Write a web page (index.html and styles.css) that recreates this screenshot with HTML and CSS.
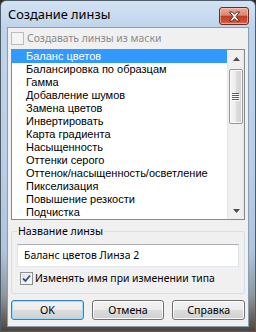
FILE: index.html
```html
<!DOCTYPE html>
<html>
<head>
<meta charset="utf-8">
<link rel="stylesheet" href="styles.css">
</head>
<body>
<div class="window">
  <div class="titlebar">
    <span class="title">Создание линзы</span>
    <div class="close">
      <svg width="13" height="11" viewBox="0 0 13 11"><path d="M1.5,1 h3 l2,2.3 l2,-2.3 h3 l-3.5,4.5 l3.5,4.5 h-3 l-2,-2.3 l-2,2.3 h-3 l3.5,-4.5 z" fill="#fff" stroke="#5a241a" stroke-width="1" stroke-linejoin="round"/></svg>
    </div>
  </div>
  <div class="client">
    <div class="check disabled"><span class="box"></span><span class="lbl">Создавать линзы из маски</span></div>
    <div class="list">
      <ul class="items">
        <li class="sel">Баланс цветов</li>
        <li>Балансировка по образцам</li>
        <li>Гамма</li>
        <li>Добавление шумов</li>
        <li>Замена цветов</li>
        <li>Инвертировать</li>
        <li>Карта градиента</li>
        <li>Насыщенность</li>
        <li>Оттенки серого</li>
        <li>Оттенок/насыщенность/осветление</li>
        <li>Пикселизация</li>
        <li>Повышение резкости</li>
        <li>Подчистка</li>
      </ul>
      <div class="scrollbar">
        <div class="arrow"><svg width="7" height="4" viewBox="0 0 7 4"><path d="M0,4 L3.5,0 L7,4 z" fill="#4d4d4d"/></svg></div>
        <div class="thumb">
          <svg width="8" height="8" viewBox="0 0 8 8"><path d="M0,0.5 h7 M0,2.5 h7 M0,4.5 h7 M0,6.5 h7" stroke="#5e5e5e" stroke-width="1"/><path d="M1,1.5 h7 M1,3.5 h7 M1,5.5 h7 M1,7.5 h7" stroke="#ffffff" stroke-width="1"/></svg>
        </div>
        <div class="track"></div>
        <div class="arrow"><svg width="7" height="4" viewBox="0 0 7 4"><path d="M0,0 L3.5,4 L7,0 z" fill="#4d4d4d"/></svg></div>
      </div>
    </div>
    <fieldset class="group">
      <legend>Название линзы</legend>
      <div class="edit">Баланс цветов Линза 2</div>
      <div class="check checked-row"><span class="box on"><svg width="9" height="9" viewBox="0 0 9 9"><path d="M1,4.5 L3.5,7 L8,1.5" fill="none" stroke="#3b4f86" stroke-width="1.8"/></svg></span><span class="lbl">Изменять имя при изменении типа</span></div>
    </fieldset>
    <div class="buttons">
      <button class="btn default">OK</button>
      <button class="btn">Отмена</button>
      <button class="btn">Справка</button>
    </div>
  </div>
</div>
</body>
</html>
```
FILE: styles.css
```css
* { box-sizing: border-box; }
html, body { margin: 0; padding: 0; }
body {
  width: 256px;
  height: 332px;
  overflow: hidden;
  background: #2e2924;
  font-family: "Noto Sans", sans-serif;
  font-size: 10.4px;
  color: #000;
}
.window {
  width: 256px;
  height: 332px;
  border: 1px solid #4f5c6b;
  border-radius: 6px 6px 0 0;
  background: linear-gradient(180deg, #d3e3f4 0px, #bfd4eb 26px, #b9d0e8 150px, #b0c5dc 250px, #8f969c 295px, #4a3f36 332px);
  display: flex;
  flex-direction: column;
}
.titlebar {
  height: 26px;
  flex: none;
  display: flex;
  align-items: flex-start;
  padding: 0 6px 0 7px;
}
.title {
  font-size: 12.8px;
  line-height: 27px;
  color: #000;
}
.close {
  margin-left: auto;
  margin-top: 6px;
  width: 30px;
  height: 18px;
  border: 1px solid #6e2a1e;
  border-radius: 3px;
  background: linear-gradient(180deg, #eba99b 0%, #dc8671 45%, #c23d25 52%, #cc5239 85%, #dc7a5d 100%);
  box-shadow: inset 0 0 0 1px rgba(255,220,210,0.5);
  display: flex;
  align-items: center;
  justify-content: center;
}
.client {
  flex: 1;
  margin: 0 6px 4px 6px;
  border: 1px solid #8b9db2;
  background: #f0f0f0;
  padding: 0 3px;
  display: flex;
  flex-direction: column;
}
.check {
  display: flex;
  align-items: center;
  gap: 3px;
  height: 13px;
  margin-top: 4px;
}
.check .lbl { line-height: 13px; white-space: nowrap; }
.check.disabled .lbl { color: #8a8a8a; }
.box {
  width: 13px;
  height: 13px;
  flex: none;
  border: 1px solid #bcbcbc;
  background: #f4f4f4;
}
.box.on {
  border: 1px solid #8e8f8f;
  background: linear-gradient(135deg, #dcdfe3, #fbfbfb);
  box-shadow: inset 0 0 0 1px #f4f4f4;
  display: flex;
  align-items: center;
  justify-content: center;
}
.list {
  margin-top: 4px;
  height: 171px;
  border: 1px solid #828790;
  background: #fff;
  display: flex;
}
.items {
  flex: 1;
  list-style: none;
  margin: 0;
  padding: 0;
  font-family: "Liberation Sans", sans-serif;
  font-size: 11px;
}
.items li {
  height: 13px;
  line-height: 13px;
  padding-left: 14px;
  white-space: nowrap;
  color: #000;
}
.items li.sel {
  background: #3399ff;
  color: #fff;
}
.scrollbar {
  width: 17px;
  flex: none;
  background: linear-gradient(90deg, #e6e6e6 0, #f0f0f0 2px, #f0f0f0 14px, #e8e8e8 17px);
  display: flex;
  flex-direction: column;
}
.arrow {
  height: 17px;
  display: flex;
  align-items: center;
  justify-content: center;
  padding-left: 1px;
}
.thumb {
  margin: 2px 1px 0 2px;
  height: 55px;
  border: 1px solid #979797;
  border-radius: 2px;
  background: linear-gradient(90deg, #f6f6f6 0%, #ebebeb 50%, #dcdcdc 51%, #d2d2d2 100%);
  box-shadow: inset 0 0 0 1px #f8f8f8;
  display: flex;
  align-items: center;
  justify-content: center;
}
.track { flex: 1; }
.group {
  margin: 4px 0 0 0;
  padding: 6px 5px 8px 5px;
  border: 1px solid #d5dfe5;
  border-radius: 3px;
  min-width: 0;
}
.group legend {
  padding: 0 1px;
  line-height: 14px;
  font-size: 10.6px;
}
.edit {
  height: 23px;
  border: 1px solid;
  border-color: #abadb3 #dbdfe6 #e3e9ef #e2e3ea;
  background: #fff;
  padding-left: 6px;
  line-height: 21px;
  white-space: nowrap;
}
.checked-row {
  margin-top: 5px;
  padding-left: 3px;
  gap: 2px;
}
.buttons {
  display: flex;
  gap: 8px;
  margin-top: 6px;
}
.btn {
  width: 73px;
  height: 20px;
  padding: 0;
  border: 1px solid #707070;
  border-radius: 3px;
  background: linear-gradient(180deg, #f2f2f2 0%, #ebebeb 50%, #dddddd 50%, #cfcfcf 100%);
  box-shadow: inset 0 0 0 1px #fcfcfc;
  font-family: "Noto Sans", sans-serif;
  font-size: 10.6px;
  color: #000;
  line-height: 17px;
}
.btn.default {
  border-color: #3c7fb1;
  box-shadow: inset 0 0 0 1px #9fdcfa;
}
```
